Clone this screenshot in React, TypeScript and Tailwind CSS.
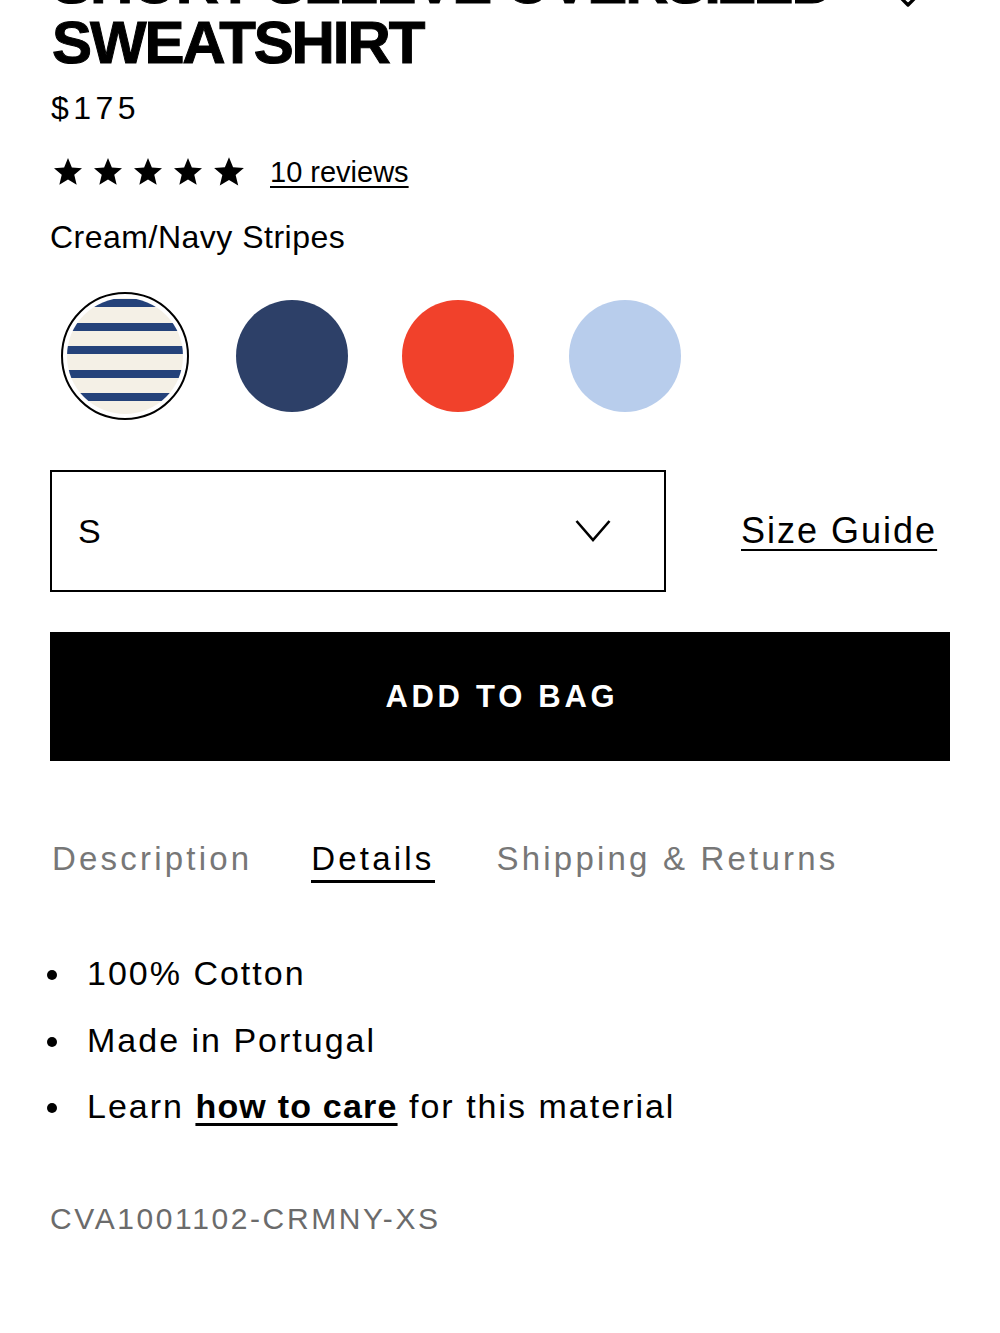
import React from "react";

const sans = { fontFamily: '"Liberation Sans", Arial, sans-serif' };

function Star({ size = 32 }: { size?: number }) {
  return (
    <svg width={size} height={size} viewBox="0 0 24 24" className="block">
      <polygon
        points="12,1.5 14.9,8.6 22.5,9.2 16.7,14.1 18.5,21.6 12,17.6 5.5,21.6 7.3,14.1 1.5,9.2 9.1,8.6"
        fill="#000"
      />
    </svg>
  );
}

export default function App() {
  return (
    <div className="relative w-[1000px] h-[1333px] overflow-hidden bg-white text-black" style={sans}>
      {/* wishlist heart, mostly scrolled off */}
      <svg
        className="absolute left-[888px] top-[-30px]"
        width="40"
        height="40"
        viewBox="0 0 24 24"
        fill="none"
        stroke="#000"
        strokeWidth="2"
        strokeLinecap="round"
        strokeLinejoin="round"
      >
        <path d="M19 14c1.49-1.46 3-3.21 3-5.5A5.5 5.5 0 0 0 16.5 3c-1.76 0-3 .5-4.5 2-1.5-1.5-2.74-2-4.5-2A5.5 5.5 0 0 0 2 8.5c0 2.3 1.5 4.05 3 5.5l7 7Z" />
      </svg>

      <div className="px-[50px] flex flex-col">
        <h1 className="mt-[-47px] ml-[2px] text-[60px] leading-[60px] font-bold tracking-[-0.035em] uppercase [-webkit-text-stroke:1px_#000]">
          Short Sleeve Oversized
          <br />
          Sweatshirt
        </h1>

        <div className="mt-[19px] ml-[1px] text-[32px] leading-none tracking-[0.14em]">$175</div>

        <div className="mt-[33px] ml-[2px] flex items-center h-[30px]">
          <div className="flex items-center gap-[8px]">
            <Star />
            <Star />
            <Star />
            <Star />
            <Star size={34} />
          </div>
          <a className="ml-[24px] text-[29px] leading-[30px] underline underline-offset-[4px] decoration-[2px]">
            10 reviews
          </a>
        </div>

        <div className="mt-[34px] text-[32px] leading-none tracking-[0.5px]">Cream/Navy Stripes</div>

        <div className="mt-[39px] ml-[11px] flex gap-[38.5px]">
          <div className="w-[128px] h-[128px] rounded-full border-[2.5px] border-black p-[4px] flex items-center justify-center">
            <div className="w-full h-full rounded-full bg-[#f4f0e6] bg-[repeating-linear-gradient(180deg,#f4f0e6_0px,#f4f0e6_1px,#24427a_1px,#24427a_9px,#f4f0e6_9px,#f4f0e6_23.5px)]" />
          </div>
          <div className="w-[128px] h-[128px] flex items-center justify-center">
            <div className="w-[112px] h-[112px] rounded-full bg-[#2d4068]" />
          </div>
          <div className="w-[128px] h-[128px] flex items-center justify-center">
            <div className="w-[112px] h-[112px] rounded-full bg-[#f1412b]" />
          </div>
          <div className="w-[128px] h-[128px] flex items-center justify-center">
            <div className="w-[112px] h-[112px] rounded-full bg-[#b8cdec]" />
          </div>
        </div>

        <div className="mt-[50px] flex items-center">
          <div className="w-[616px] h-[122px] border-2 border-black flex items-center justify-between pl-[26px] pr-[53px]">
            <span className="text-[34px] leading-none">S</span>
            <svg width="36" height="24" viewBox="0 0 36 24" fill="none" stroke="#000" strokeWidth="2.6">
              <path d="M1.5 2 L18 21 L34.5 2" />
            </svg>
          </div>
          <a className="ml-[75px] text-[36px] leading-none tracking-[2px] underline underline-offset-[6px] decoration-[2px]">
            Size Guide
          </a>
        </div>

        <button className="mt-[40px] w-[900px] h-[129px] bg-black text-white flex items-center justify-center">
          <span className="text-[31px] leading-none font-bold tracking-[0.12em] pl-[0.12em]">ADD TO BAG</span>
        </button>

        <div className="mt-[81px] ml-[2px] flex items-start text-[33px] leading-none tracking-[3.2px]">
          <span className="text-[#777777]">Description</span>
          <span className="ml-[59px] text-black border-b-[3px] border-black pb-[5px]">Details</span>
          <span className="ml-[62px] text-[#777777]">Shipping &amp; Returns</span>
        </div>

        <ul className="mt-[73px] flex flex-col gap-[32.5px] text-[34px] leading-none tracking-[2px]">
          <li className="flex items-center">
            <span className="w-[10px] h-[10px] rounded-full bg-black ml-[-3px] mr-[30px] mt-[4px]" />
            <span>100% Cotton</span>
          </li>
          <li className="flex items-center">
            <span className="w-[10px] h-[10px] rounded-full bg-black ml-[-3px] mr-[30px] mt-[4px]" />
            <span>Made in Portugal</span>
          </li>
          <li className="flex items-center">
            <span className="w-[10px] h-[10px] rounded-full bg-black ml-[-3px] mr-[30px] mt-[4px]" />
            <span>
              Learn{" "}
              <a className="font-bold tracking-[1.2px] underline underline-offset-[5px] decoration-[3px]">how to care</a>{" "}
              for this material
            </span>
          </li>
        </ul>

        <div className="mt-[81px] text-[30px] leading-none tracking-[2.6px] text-[#6b6b6b]">CVA1001102-CRMNY-XS</div>
      </div>
    </div>
  );
}
